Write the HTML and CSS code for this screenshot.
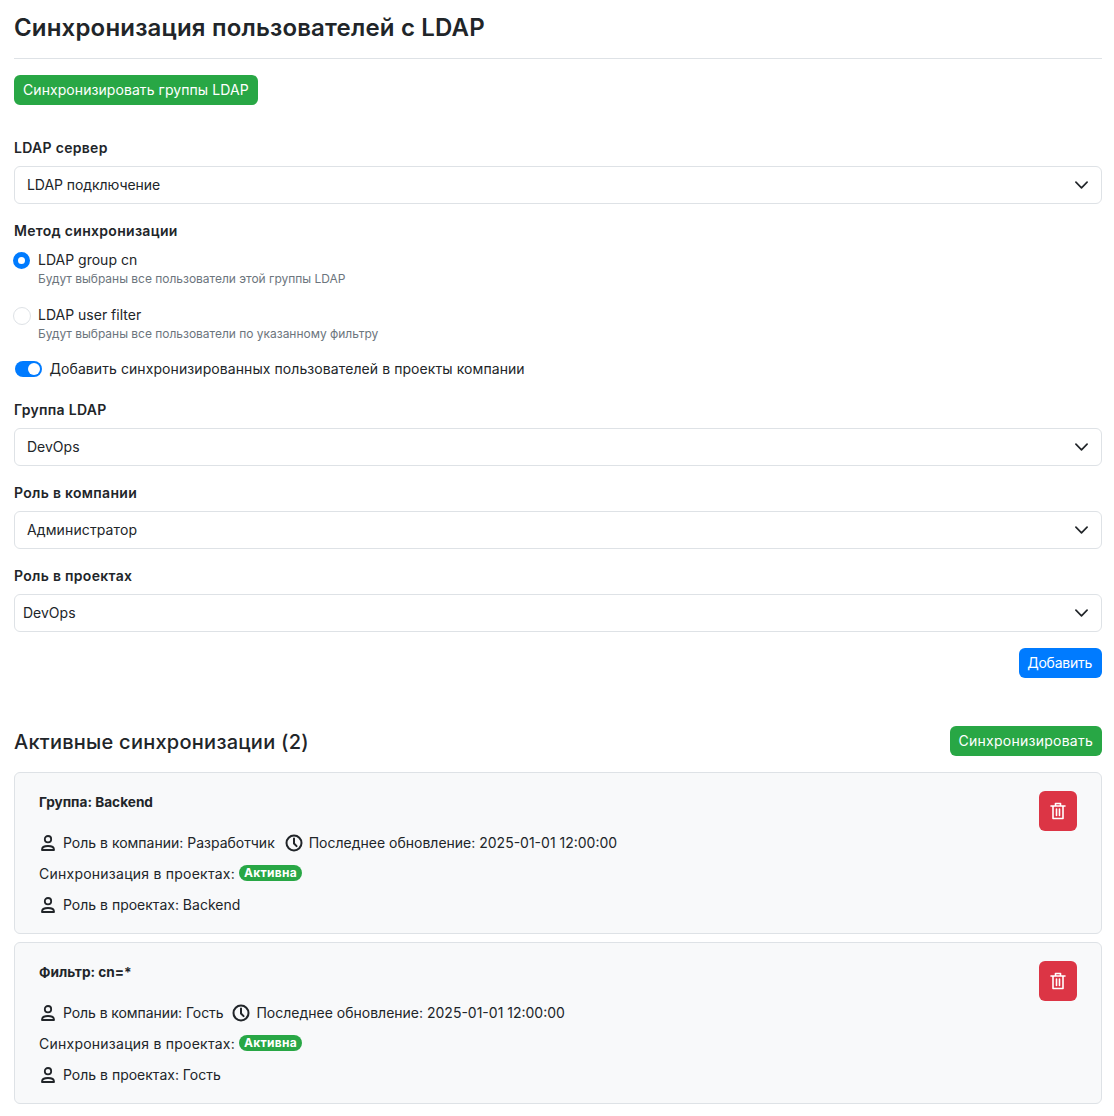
FILE: index.html
```html
<!DOCTYPE html>
<html lang="ru">
<head>
<meta charset="utf-8">
<title>Синхронизация пользователей с LDAP</title>
<link rel="stylesheet" href="styles.css">
</head>
<body>
<main class="page">
  <h1 class="title">Синхронизация пользователей с LDAP</h1>
  <button class="btn btn-green top-btn">Синхронизировать группы LDAP</button>

  <form class="form">
    <div class="field">
      <div class="label">LDAP сервер</div>
      <div class="select"><span class="narrow-t">LDAP подключение</span><svg class="chev" viewBox="0 0 14 8"><path d="M1 1l6 6 6-6"/></svg></div>
    </div>
    <div class="field method">
      <div class="label">Метод синхронизации</div>
      <div class="radio">
        <span class="dot on"></span>
        <div><div class="radio-t">LDAP group cn</div><div class="hint">Будут выбраны все пользователи этой группы LDAP</div></div>
      </div>
      <div class="radio second">
        <span class="dot"></span>
        <div><div class="radio-t">LDAP user filter</div><div class="hint">Будут выбраны все пользователи по указанному фильтру</div></div>
      </div>
    </div>
    <div class="switch-row"><span class="switch"></span><span class="switch-t">Добавить синхронизированных пользователей в проекты компании</span></div>
    <div class="field">
      <div class="label">Группа LDAP</div>
      <div class="select"><span>DevOps</span><svg class="chev" viewBox="0 0 14 8"><path d="M1 1l6 6 6-6"/></svg></div>
    </div>
    <div class="field">
      <div class="label">Роль в компании</div>
      <div class="select"><span class="spread-t">Администратор</span><svg class="chev" viewBox="0 0 14 8"><path d="M1 1l6 6 6-6"/></svg></div>
    </div>
    <div class="field">
      <div class="label">Роль в проектах</div>
      <div class="select tight"><span>DevOps</span><svg class="chev" viewBox="0 0 14 8"><path d="M1 1l6 6 6-6"/></svg></div>
    </div>
    <div class="actions"><button type="button" class="btn btn-blue">Добавить</button></div>
  </form>

  <div class="section-head">
    <h2 class="subtitle">Активные синхронизации (2)</h2>
    <button class="btn btn-green wide">Синхронизировать</button>
  </div>

  <section class="card">
    <div class="card-body">
      <div class="card-title">Группа: Backend</div>
      <div class="line"><svg class="ico" viewBox="0 0 18 18"><circle cx="9" cy="5.2" r="3.2"/><path d="M3 16v-.6c0-2.2 2.2-3.4 6-3.4s6 1.2 6 3.4v.6z"/></svg><span>Роль в компании: Разработчик</span><svg class="ico clock" viewBox="0 0 18 18"><circle cx="9" cy="9" r="7.5"/><path d="M9 4.5v5l2.6 2.6"/></svg><span>Последнее обновление: 2025-01-01 12:00:00</span></div>
      <div class="line"><span class="sync-t">Синхронизация в проектах:</span><span class="badge">Активна</span></div>
      <div class="line"><svg class="ico" viewBox="0 0 18 18"><circle cx="9" cy="5.2" r="3.2"/><path d="M3 16v-.6c0-2.2 2.2-3.4 6-3.4s6 1.2 6 3.4v.6z"/></svg><span>Роль в проектах: Backend</span></div>
    </div>
    <button class="trash" aria-label="Удалить"><svg viewBox="0 0 16 18"><path d="M1 4h14M5.5 4V1.5h5V4M3 4v12.5h10V4M6.5 7v6.5M9.5 7v6.5"/></svg></button>
  </section>

  <section class="card">
    <div class="card-body">
      <div class="card-title">Фильтр: cn=*</div>
      <div class="line"><svg class="ico" viewBox="0 0 18 18"><circle cx="9" cy="5.2" r="3.2"/><path d="M3 16v-.6c0-2.2 2.2-3.4 6-3.4s6 1.2 6 3.4v.6z"/></svg><span class="guest-t">Роль в компании: Гость</span><svg class="ico clock near" viewBox="0 0 18 18"><circle cx="9" cy="9" r="7.5"/><path d="M9 4.5v5l2.6 2.6"/></svg><span>Последнее обновление: 2025-01-01 12:00:00</span></div>
      <div class="line"><span class="sync-t">Синхронизация в проектах:</span><span class="badge">Активна</span></div>
      <div class="line"><svg class="ico" viewBox="0 0 18 18"><circle cx="9" cy="5.2" r="3.2"/><path d="M3 16v-.6c0-2.2 2.2-3.4 6-3.4s6 1.2 6 3.4v.6z"/></svg><span>Роль в проектах: Гость</span></div>
    </div>
    <button class="trash" aria-label="Удалить"><svg viewBox="0 0 16 18"><path d="M1 4h14M5.5 4V1.5h5V4M3 4v12.5h10V4M6.5 7v6.5M9.5 7v6.5"/></svg></button>
  </section>
</main>
</body>
</html>
```
FILE: styles.css
```css
* { box-sizing: border-box; }
html, body { margin: 0; background: #fff; }
body { font-family: Inter, "Noto Sans", sans-serif; font-size: 14px; line-height: 21px; color: #212529; }
.page { padding: 0 12px 12px 14px; }
.title { margin: 0; padding: 12px 0 14px; font-size: 24px; line-height: 32px; font-weight: 600; letter-spacing: .18px; border-bottom: 1px solid #dee2e6; height: 59px; }
.btn { display: inline-block; height: 30px; padding: 0 9px; border: 0; border-radius: 6px; font: 400 14px/30px Inter, sans-serif; color: #fff; }
.btn-green { background: #28a745; }
.btn-blue { background: #007bff; letter-spacing: -.25px; padding: 0 10px 0 8px; }
.btn-green.wide { letter-spacing: .25px; }
.top-btn { display: block; margin-top: 16px; letter-spacing: .07px; }
.form { margin-top: 32px; }
.field { margin-bottom: 16px; }
.label { font-weight: 600; line-height: 21px; margin-bottom: 8px; letter-spacing: .3px; }
.select { display: flex; justify-content: space-between; align-items: center; height: 38px; padding: 0 13px 1px 12px; background: #fff; border: 1px solid #dee2e6; border-radius: 6px; }
.select.tight { padding-left: 8px; }
.narrow-t { letter-spacing: -.06px; }
.spread-t { letter-spacing: .12px; }
.chev { width: 13px; height: 8px; fill: none; stroke: #212529; stroke-width: 1.8; stroke-linecap: round; stroke-linejoin: round; }
.method { margin-bottom: 0; }
.method .label { margin-bottom: 0; }
.radio { display: flex; gap: 8px; margin-top: 10px; }
.radio.second { margin-top: 19px; }
.radio-t { line-height: 18px; }
.hint { font-size: 12px; line-height: 16px; color: #6c757d; margin-top: 2px; letter-spacing: -.02px; }
.dot { flex: none; width: 18px; height: 18px; margin: 1px -1px 0 -1px; border-radius: 50%; border: 1px solid #dee2e6; background: #fff; }
.dot.on { border: 5px solid #007bff; width: 17px; height: 17px; margin-right: 0; }
.switch-row { display: flex; align-items: center; gap: 7.5px; margin-top: 16px; height: 21px; margin-bottom: 20px; }
.switch-t { letter-spacing: .08px; }
.switch { position: relative; flex: none; width: 27px; height: 16px; margin-left: 1px; border-radius: 8px; background: #007bff; }
.switch::after { content: ""; position: absolute; right: 2px; top: 2px; width: 12px; height: 12px; border-radius: 50%; background: #fff; }
.actions { display: flex; justify-content: flex-end; }
.section-head { display: flex; justify-content: space-between; align-items: center; margin-top: 48px; height: 30px; }
.subtitle { margin: 2px 0 0; font-size: 20px; font-weight: 500; line-height: 30px; letter-spacing: .25px; }
.card { display: flex; justify-content: space-between; align-items: flex-start; margin-top: 16px; height: 162px; padding: 17px 24px 0; background: #f8f9fa; border: 1px solid #dee2e6; border-radius: 6px; }
.card + .card { margin-top: 8px; }
.card-title { font-size: 13.65px; font-weight: 700; line-height: 21px; margin-top: 2px; margin-bottom: 19px; }
.line { display: flex; align-items: center; height: 21px; margin-bottom: 10px; white-space: pre; }
.sync-t { letter-spacing: .24px; }
.guest-t { letter-spacing: -.08px; }
.ico { flex: none; width: 18px; height: 18px; margin-right: 6px; fill: none; stroke: #212529; stroke-width: 1.8; stroke-linecap: round; stroke-linejoin: round; }
.ico.clock { margin-left: 10px; margin-right: 6px; stroke-width: 2; }
.ico.clock.near { margin-left: 9px; }
.badge { display: inline-block; margin-left: 4px; margin-top: -2px; height: 16px; padding: 0 5px; border-radius: 8px; background: #28a745; color: #fff; font-size: 12px; font-weight: 700; line-height: 16px; letter-spacing: .3px; }
.trash { display: flex; align-items: center; justify-content: center; width: 38px; height: 40px; margin-top: 1px; padding: 0; border: 0; border-radius: 6px; background: #dc3545; }
.trash svg { width: 16px; height: 18px; fill: none; stroke: #fff; stroke-width: 1.6; stroke-linecap: round; stroke-linejoin: round; }
```
